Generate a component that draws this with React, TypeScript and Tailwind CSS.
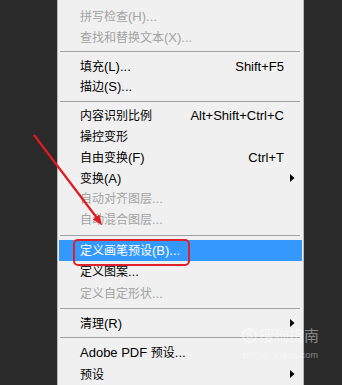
import React from "react";

type Item =
  | { type: "sep"; h: string }
  | {
      type: "item";
      label: string;
      shortcut?: string;
      disabled?: boolean;
      sub?: boolean;
      active?: boolean;
      h: string;
    };

const items: Item[] = [
  { type: "item", label: "拼写检查(H)...", disabled: true, h: "h-[21px]" },
  { type: "item", label: "查找和替换文本(X)...", disabled: true, h: "h-[21px]" },
  { type: "sep", h: "h-[8px]" },
  { type: "item", label: "填充(L)...", shortcut: "Shift+F5", h: "h-[21px]" },
  { type: "item", label: "描边(S)...", h: "h-[21px]" },
  { type: "sep", h: "h-[8px]" },
  { type: "item", label: "内容识别比例", shortcut: "Alt+Shift+Ctrl+C", h: "h-[21px]" },
  { type: "item", label: "操控变形", h: "h-[21px]" },
  { type: "item", label: "自由变换(F)", shortcut: "Ctrl+T", h: "h-[21px]" },
  { type: "item", label: "变换(A)", sub: true, h: "h-[21px]" },
  { type: "item", label: "自动对齐图层...", disabled: true, h: "h-[21px]" },
  { type: "item", label: "自动混合图层...", disabled: true, h: "h-[21px]" },
  { type: "sep", h: "h-[10px]" },
  { type: "item", label: "定义画笔预设(B)...", active: true, h: "h-[21px]" },
  { type: "item", label: "定义图案...", h: "h-[22px]" },
  { type: "item", label: "定义自定形状...", disabled: true, h: "h-[22px]" },
  { type: "sep", h: "h-[8px]" },
  { type: "item", label: "清理(R)", sub: true, h: "h-[22px]" },
  { type: "sep", h: "h-[7px]" },
  { type: "item", label: "Adobe PDF 预设...", h: "h-[22px]" },
  { type: "item", label: "预设", sub: true, h: "h-[22px]" },
];

function Label({ text }: { text: string }) {
  const parts = text.split(/([\u3400-\u9fff]+)/).filter((p) => p.length > 0);
  return (
    <span className="whitespace-pre">
      {parts.map((p, i) =>
        /[\u3400-\u9fff]/.test(p) ? (
          <span key={i} className="text-[12px]">
            {p}
          </span>
        ) : (
          <span key={i}>{p}</span>
        )
      )}
    </span>
  );
}

export default function App() {
  return (
    <div
      className="relative w-[342px] h-[385px] overflow-hidden bg-[#2a2a2a] flex"
      style={{ fontFamily: '"Liberation Sans", "Noto Sans CJK SC", sans-serif' }}
    >
      <div className="w-[57px] shrink-0" />
      <div className="w-[247px] shrink-0 bg-[#f0f0f0] border-l border-r border-[#b8b8b8] flex flex-col pt-[6px] text-[13px] leading-none">
        {items.map((it, idx) =>
          it.type === "sep" ? (
            <div key={idx} className={`${it.h} flex items-center pl-[2px] pr-[3px]`}>
              <div className="w-full h-px bg-[#a0a0a0]" />
            </div>
          ) : (
            <div
              key={idx}
              className={`${it.h} mx-[1px] flex items-center pl-[21px] ${
                it.active
                  ? "bg-[#3399ff] text-white"
                  : it.disabled
                  ? "text-[#a3a3a3]"
                  : "text-black"
              }`}
            >
              <div className="flex-1">
                <Label text={it.label} />
              </div>
              {it.shortcut && <div className="whitespace-pre">{it.shortcut}</div>}
              <div className="w-[18px] h-full flex items-center pl-[6px]">
                {it.sub && (
                  <svg width="5" height="8" viewBox="0 0 5 8">
                    <polygon points="0,0 4.5,4 0,8" fill="#000" />
                  </svg>
                )}
              </div>
            </div>
          )
        )}
      </div>
      <div className="flex-1" />

      {/* red annotation box */}
      <div className="absolute left-[73px] top-[239px] w-[117px] h-[27px] border-2 border-[#e0202a] rounded-[5px] pointer-events-none" />

      {/* red arrow */}
      <svg
        className="absolute left-0 top-0 pointer-events-none"
        width="342"
        height="385"
        viewBox="0 0 342 385"
      >
        <line x1="34" y1="135" x2="97" y2="218" stroke="#e01a1f" strokeWidth="2.2" />
        <polygon points="102,225 92.8,219.4 99.2,214.6" fill="#e01a1f" />
      </svg>

      {/* watermark */}
      <div className="absolute left-[242px] top-[328px] flex flex-col items-start pointer-events-none text-white/45">
        <div className="flex items-center gap-[2px]">
          <div className="w-[15px] h-[15px] rounded-full border-2 border-white/45 flex items-center justify-center text-[10px] font-bold leading-none">
            S
          </div>
          <span className="text-[15px] leading-none tracking-[0px]">搜狗指南</span>
        </div>
        <div className="text-[9px] leading-none mt-[8px] tracking-[0.2px]">zhinan.sogou.com</div>
      </div>
    </div>
  );
}
